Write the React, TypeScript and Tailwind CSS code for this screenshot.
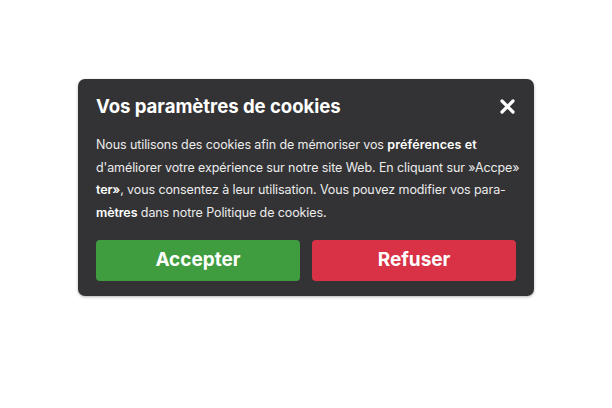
export default function App() {
  return (
    <div className="w-[612px] h-[408px] bg-white flex items-start justify-center pt-[79px] font-['Inter',sans-serif]">
      <div className="w-[456px] rounded-[7px] bg-[#333335] px-[18px] pt-[14px] pb-[15px] shadow-[0_1px_3px_rgba(0,0,0,0.3)]">
        <div className="flex items-center justify-between">
          <h2 className="text-[18.6px] font-bold text-white tracking-[-0.05px]">Vos paramètres de cookies</h2>
          <button className="mr-[1px] text-white">
            <svg width="15" height="15" viewBox="0 0 15 15">
              <path d="M2 2 L13 13 M13 2 L2 13" stroke="white" strokeWidth="3.2" strokeLinecap="round" />
            </svg>
          </button>
        </div>
        <div className="mt-[13px] text-[12.5px] leading-[22.7px] text-[#ececec] tracking-[-0.1px] whitespace-nowrap">
          <div>
            Nous utilisons des cookies afin de mémoriser vos <b className="font-semibold text-white tracking-[0.1px]">préférences et</b>
          </div>
          <div>d'améliorer votre expérience sur notre site Web. En cliquant sur »Accpe»</div>
          <div>
            <b className="font-semibold text-white">ter»</b>, vous consentez à leur utilisation. Vous pouvez modifier vos para-
          </div>
          <div>
            <b className="font-semibold text-white">mètres</b> dans notre Politique de cookies.
          </div>
        </div>
        <div className="mt-[15px] grid grid-cols-2 gap-[12px]">
          <button className="h-[41px] rounded-[4px] bg-[#3f9c3f] text-white text-[19px] font-bold">Accepter</button>
          <button className="h-[41px] rounded-[4px] bg-[#d93146] text-white text-[19px] font-bold">Refuser</button>
        </div>
      </div>
    </div>
  );
}
